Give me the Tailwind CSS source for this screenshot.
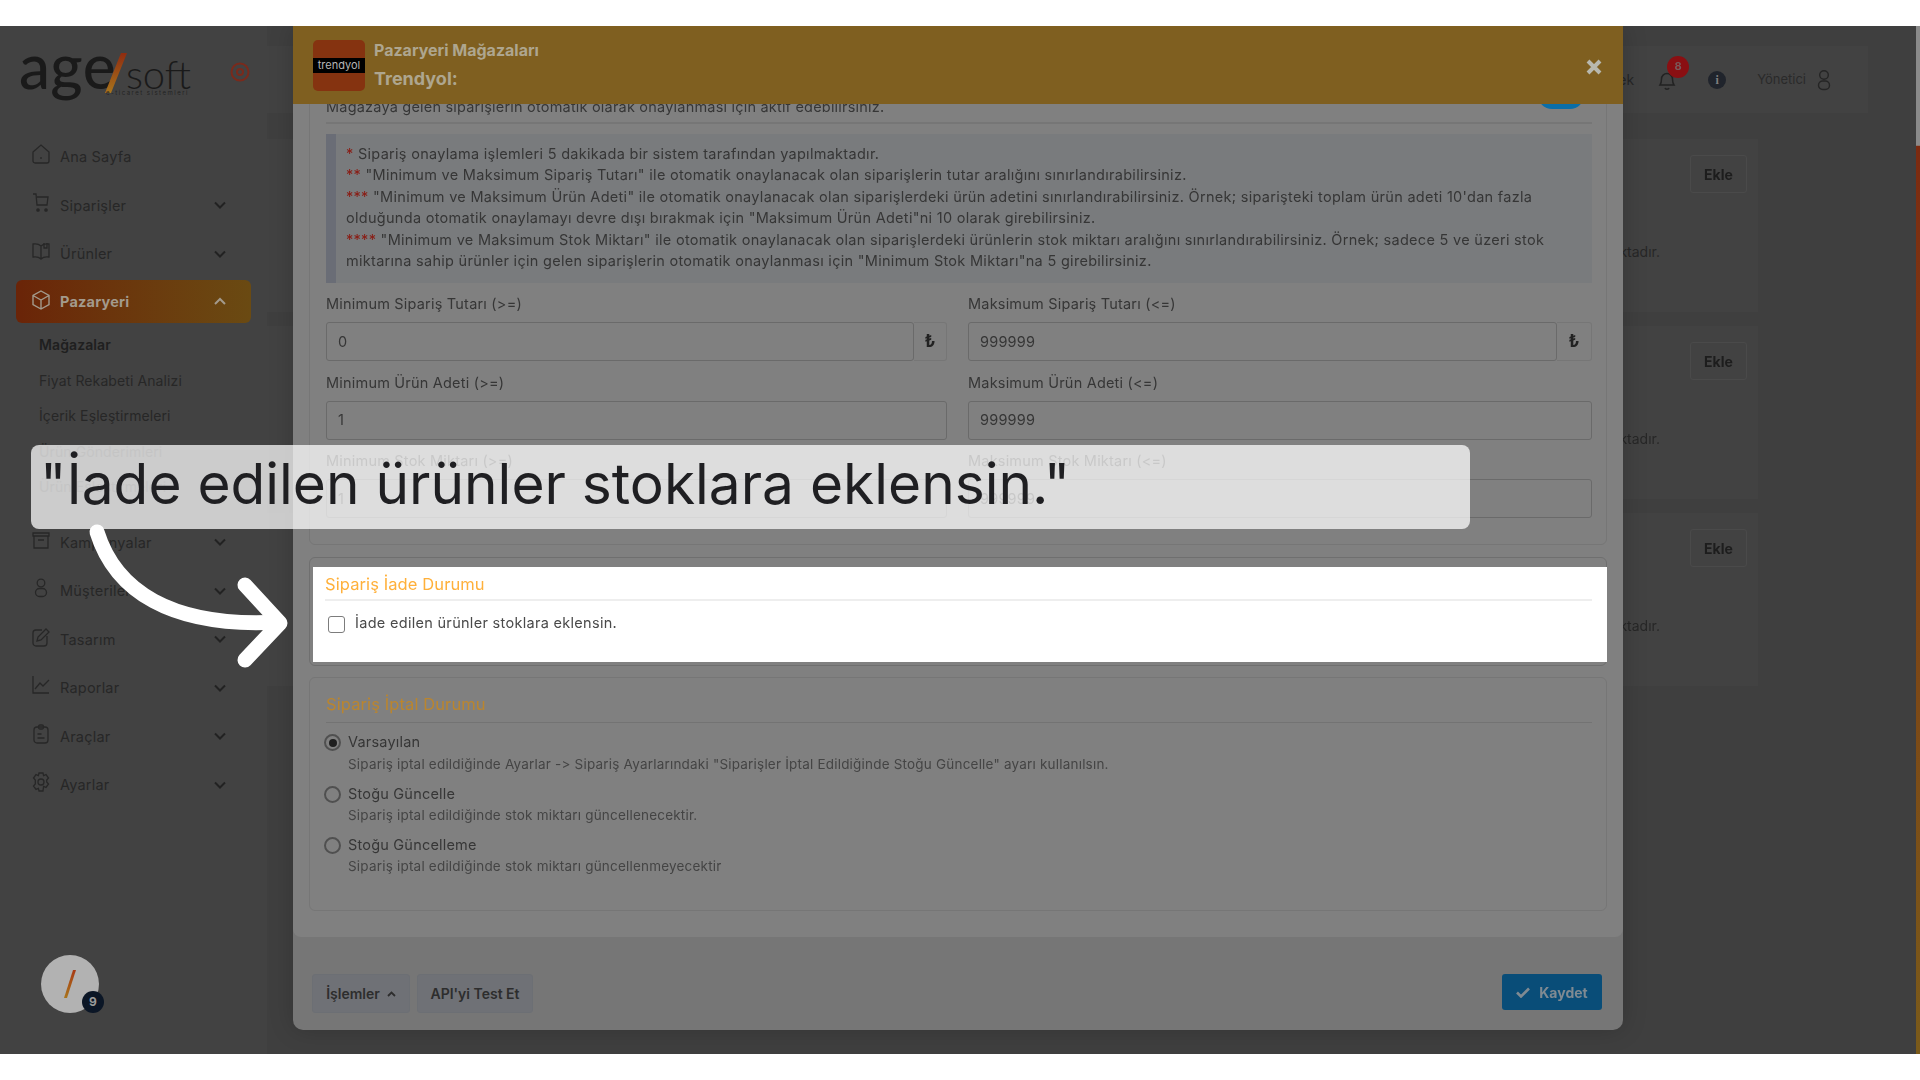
<!DOCTYPE html>
<html lang="tr">
<head>
<meta charset="utf-8">
<title>Sipariş İade Durumu</title>
<script src="https://cdn.jsdelivr.net/npm/@tailwindcss/browser@4"></script>
</head>
<body class="m-0 w-[1920px] h-[1080px] overflow-hidden bg-white font-['Inter',sans-serif]">
<div class="h-[26px] bg-white"></div>
<div class="relative h-[1028px] w-[1920px] overflow-hidden bg-[#3f3f3f]">
  <div class="flex h-full blur-[0.4px]">
    <!-- Sidebar -->
    <aside class="w-[267px] h-full shrink-0 bg-[#424242] text-[#272727] text-[14.5px] tracking-[0.2px]">
      <div class="relative h-[107px]">
        <div class="absolute left-[19px] top-[9px] flex items-baseline leading-[60px] text-[#1a1a1a] tracking-normal">
          <span class="font-['Lato'] text-[62px] font-medium tracking-[0.4px]">age</span>
          <svg width="24" height="42" viewBox="0 0 24 42" class="-ml-[12px] -mr-[2px] self-center mt-[6px]"><defs><linearGradient id="lg" x1="0" y1="1" x2="0" y2="0"><stop offset="0" stop-color="#a8741c"/><stop offset="1" stop-color="#8f2c10"/></linearGradient></defs><path d="M17 1h6L7 41H1z" fill="url(#lg)"/></svg>
          <span class="font-['Lato'] text-[40px] font-light">soft</span>
        </div>
        <div class="absolute left-[106px] top-[62px] text-[6px] tracking-[1.5px] leading-[10px] text-[#222]">e-ticaret sistemleri</div>
        <svg class="absolute left-[230px] top-[36px]" width="20" height="20" viewBox="0 0 20 20" fill="none" stroke="#7a2a1c"><circle cx="10" cy="10" r="8.500" stroke-width="2"/><circle cx="10" cy="10" r="3" stroke-width="2"/></svg>
      </div>
      <nav class="flex flex-col pl-[16px] pr-[16px]">
        <a class="flex items-center h-[48.5px] pl-[16px] gap-[10px]"><svg class="-translate-y-[3px]" width="18" height="20" viewBox="0 0 18 20" fill="none" stroke="#272727" stroke-width="1.3"><path d="M1 8l8-7 8 7v9a2 2 0 0 1-2 2H3a2 2 0 0 1-2-2z"/><path d="M9 13v2"/></svg><span>Ana Sayfa</span></a>
        <a class="flex items-center h-[48.5px] pl-[16px] gap-[10px]"><svg class="-translate-y-[3px]" width="18" height="20" viewBox="0 0 18 20" fill="none" stroke="#272727" stroke-width="1.3"><path d="M1 1h3l1 11h10l1-8H5"/><circle cx="6" cy="17" r="1.2" fill="#272727"/><circle cx="14" cy="17" r="1.2" fill="#272727"/></svg><span>Siparişler</span><svg class="ml-auto mr-[24px]" width="14" height="9" viewBox="0 0 14 9" fill="none" stroke="#222" stroke-width="2"><path d="M2 1.500l5 5 5-5"/></svg></a>
        <a class="flex items-center h-[48.5px] pl-[16px] gap-[10px]"><svg class="-translate-y-[3px]" width="18" height="20" viewBox="0 0 18 20" fill="none" stroke="#272727" stroke-width="1.3"><path d="M9 5C7 3 4 2.500 1 3v13c3-.5 6 0 8 2 2-2 5-2.500 8-2V3c-3-.5-6 0-8 2zM9 5v13"/><path d="M12 2v5h3V2"/></svg><span>Ürünler</span><svg class="ml-auto mr-[24px]" width="14" height="9" viewBox="0 0 14 9" fill="none" stroke="#222" stroke-width="2"><path d="M2 1.500l5 5 5-5"/></svg></a>
        <a class="flex items-center h-[43px] mt-[1.5px] pl-[16px] gap-[10px] rounded-[6px] bg-gradient-to-r from-[#6a2408] to-[#6a4a12] font-bold text-[#a39a8c]"><svg class="-translate-y-[2px]" width="18" height="20" viewBox="0 0 18 20" fill="none" stroke="#a39a8c" stroke-width="1.4"><path d="M9 1l8 4.500v9L9 19l-8-4.500v-9zM1 5.500l8 4.500 8-4.500M9 10v9"/></svg><span>Pazaryeri</span><svg class="ml-auto mr-[24px]" width="14" height="9" viewBox="0 0 14 9" fill="none" stroke="#a39a8c" stroke-width="2"><path d="M2 7l5-5 5 5"/></svg></a>
        <div class="flex flex-col mt-[4px] pl-[23px] text-[14px] tracking-[0.1px]">
          <a class="flex items-center h-[35.500px] font-semibold text-[#1f1f1f]">Mağazalar</a>
          <a class="flex items-center h-[35.500px]">Fiyat Rekabeti Analizi</a>
          <a class="flex items-center h-[35.500px]">İçerik Eşleştirmeleri</a>
          <a class="flex items-center h-[35.500px]">Ürün Gönderimleri</a>
          <a class="flex items-center h-[35.500px]">Ürün Eşleştirmeleri</a>
        </div>
        <a class="flex items-center h-[48.5px] mt-[14px] pl-[16px] gap-[10px]"><svg class="-translate-y-[3px]" width="18" height="20" viewBox="0 0 18 20" fill="none" stroke="#272727" stroke-width="1.3"><path d="M2 6h14v12H2zM1 3h16v3H1zM6 10h6"/></svg><span>Kampanyalar</span><svg class="ml-auto mr-[24px]" width="14" height="9" viewBox="0 0 14 9" fill="none" stroke="#222" stroke-width="2"><path d="M2 1.500l5 5 5-5"/></svg></a>
        <a class="flex items-center h-[48.5px] pl-[16px] gap-[10px]"><svg class="-translate-y-[3px]" width="18" height="20" viewBox="0 0 18 20" fill="none" stroke="#272727" stroke-width="1.3"><circle cx="9" cy="5" r="3.800"/><rect x="3.500" y="10.500" width="11" height="8" rx="4"/></svg><span>Müşteriler</span><svg class="ml-auto mr-[24px]" width="14" height="9" viewBox="0 0 14 9" fill="none" stroke="#222" stroke-width="2"><path d="M2 1.500l5 5 5-5"/></svg></a>
        <a class="flex items-center h-[48.5px] pl-[16px] gap-[10px]"><svg class="-translate-y-[3px]" width="18" height="20" viewBox="0 0 18 20" fill="none" stroke="#272727" stroke-width="1.3"><path d="M15 9v7a3 3 0 0 1-3 3H4a3 3 0 0 1-3-3V6a3 3 0 0 1 3-3h6"/><path d="M5 14l1-4 8-8 3 3-8 8z"/></svg><span>Tasarım</span><svg class="ml-auto mr-[24px]" width="14" height="9" viewBox="0 0 14 9" fill="none" stroke="#222" stroke-width="2"><path d="M2 1.500l5 5 5-5"/></svg></a>
        <a class="flex items-center h-[48.5px] pl-[16px] gap-[10px]"><svg class="-translate-y-[3px]" width="18" height="20" viewBox="0 0 18 20" fill="none" stroke="#272727" stroke-width="1.3"><path d="M1 1v17h16"/><path d="M3 14l5-6 3 3 6-6"/></svg><span>Raporlar</span><svg class="ml-auto mr-[24px]" width="14" height="9" viewBox="0 0 14 9" fill="none" stroke="#222" stroke-width="2"><path d="M2 1.500l5 5 5-5"/></svg></a>
        <a class="flex items-center h-[48.5px] pl-[16px] gap-[10px]"><svg class="-translate-y-[3px]" width="18" height="20" viewBox="0 0 18 20" fill="none" stroke="#272727" stroke-width="1.3"><rect x="2" y="3" width="14" height="16" rx="3"/><rect x="6.500" y="1" width="5" height="4" rx="1.500"/><path d="M5.500 10h4M5.500 14h7"/></svg><span>Araçlar</span><svg class="ml-auto mr-[24px]" width="14" height="9" viewBox="0 0 14 9" fill="none" stroke="#222" stroke-width="2"><path d="M2 1.500l5 5 5-5"/></svg></a>
        <a class="flex items-center h-[48.5px] pl-[16px] gap-[10px]"><svg class="-translate-y-[3px]" width="18" height="20" viewBox="0 0 18 20" fill="none" stroke="#272727" stroke-width="1.3"><circle cx="9" cy="10" r="3"/><path d="M7 1h4l.6 2.600 2.400-1 2.500 3.400-1.800 2 0 2 1.800 2-2.500 3.400-2.400-1L11 19H7l-.6-2.600-2.400 1L1.500 14l1.800-2v-4l-1.800-2L4 2.600l2.400 1z"/></svg><span>Ayarlar</span><svg class="ml-auto mr-[24px]" width="14" height="9" viewBox="0 0 14 9" fill="none" stroke="#222" stroke-width="2"><path d="M2 1.500l5 5 5-5"/></svg></a>
      </nav>
      <div class="absolute left-[41px] top-[929px] w-[58px] h-[58px] rounded-full bg-[#b2b2b2] flex items-center justify-center">
        <svg width="14" height="30" viewBox="0 0 14 30"><defs><linearGradient id="sl" x1="0" y1="1" x2="0" y2="0"><stop offset="0" stop-color="#a8741c"/><stop offset="1" stop-color="#a83a14"/></linearGradient></defs><path d="M10 1h3L4 29H1z" fill="url(#sl)"/></svg>
        <span class="absolute left-[41px] top-[36px] w-[22px] h-[22px] rounded-full bg-[#0b1626] text-[#9a9a9a] text-[12px] font-bold flex items-center justify-center">9</span>
      </div>
    </aside>
    <!-- Page behind the dialog -->
    <main class="flex-1 h-full">
      <header class="flex items-center justify-end mt-[20px] h-[67px] w-[1601px] bg-[#424242] text-[#2a2a2a] text-[13px]">
        <span class="text-[14px] text-[#262626]">Destek</span>
        <span class="relative ml-[24px] shrink-0"><svg width="18" height="22" viewBox="0 0 18 22" fill="none" stroke="#222" stroke-width="1.500"><path d="M2 16c1-1.500 1.500-3 1.500-6a5.500 5.500 0 0 1 11 0c0 3 .5 4.500 1.500 6zM7 19c.5 1.500 3.500 1.500 4 0"/></svg><span class="absolute left-[9px] top-[-13px] w-[22px] h-[22px] rounded-full bg-[#8a0f12] text-[#7a5a5a] text-[11px] font-bold flex items-center justify-center">8</span></span>
        <span class="ml-[32px] w-[18px] h-[18px] rounded-full bg-[#20242c] text-[#7f7f7f] text-[12px] font-bold leading-[18px] text-center font-['Liberation_Serif']">i</span>
        <span class="ml-[31px]">Yönetici</span>
        <svg class="ml-[11px] mr-[37px]" width="14" height="22" viewBox="0 0 14 22" fill="none" stroke="#252525" stroke-width="1.400"><circle cx="7" cy="6" r="4.300"/><rect x="1.500" y="12" width="11" height="8.500" rx="4.200"/></svg>
      </header>
      <section class="flex flex-col gap-[14px] mt-[26px] w-[1491px]">
        <div class="relative h-[173px] bg-[#424242]"><a class="absolute right-[11px] top-[16px] w-[57px] h-[38px] flex items-center justify-center rounded-[3px] border border-[#4a4a4a] text-[#1d1d1d] text-[14px] font-bold">Ekle</a><p class="absolute right-[98px] top-[102px] whitespace-nowrap text-[14px] text-[#272727]">kullanılmaktadır.</p></div>
        <div class="relative h-[173px] bg-[#424242]"><a class="absolute right-[11px] top-[16px] w-[57px] h-[38px] flex items-center justify-center rounded-[3px] border border-[#4a4a4a] text-[#1d1d1d] text-[14px] font-bold">Ekle</a><p class="absolute right-[98px] top-[102px] whitespace-nowrap text-[14px] text-[#272727]">kullanılmaktadır.</p></div>
        <div class="relative h-[173px] bg-[#424242]"><a class="absolute right-[11px] top-[16px] w-[57px] h-[38px] flex items-center justify-center rounded-[3px] border border-[#4a4a4a] text-[#1d1d1d] text-[14px] font-bold">Ekle</a><p class="absolute right-[98px] top-[102px] whitespace-nowrap text-[14px] text-[#272727]">kullanılmaktadır.</p></div>
      </section>
    </main>
    <div class="absolute right-0 top-0 w-[4px] h-full bg-gradient-to-b from-[#8a8a8a] from-[11.600%] via-[#7c2a10] via-[11.700%] to-[#7a5a1a]"></div>
    <!-- Dialog -->
    <div class="absolute left-[293px] top-0 w-[1330px] h-[1004px] rounded-b-[10px] bg-[#767676] shadow-[0_0_24px_rgba(0,0,0,0.18)] flex flex-col">
      <div class="h-[78px] shrink-0 bg-[#7f5f20] flex items-center pl-[20px] pr-[21px] z-10">
        <div class="w-[52px] h-[51px] rounded-[5px] bg-[#853310] flex items-center"><div class="w-full h-[15px] bg-black text-[#b5b5b5] text-[11px] leading-[15px] text-center">trendyol</div></div>
        <div class="ml-[9px] mt-[5px] font-bold text-[#aea68f]"><div class="text-[16px] leading-[23px]">Pazaryeri Mağazaları</div><div class="text-[18px] leading-[34px]">Trendyol:</div></div>
        <svg class="ml-auto mt-[3px]" width="16" height="16" viewBox="0 0 16 16" stroke="#b8b8ae" stroke-width="4"><path d="M2 2l12 12M14 2L2 14"/></svg>
      </div>
      <div class="h-[833px] shrink-0 bg-[#808080] rounded-b-[8px] overflow-hidden px-[16px] text-[14.5px] tracking-[0.2px] text-[#363636]">
        <!-- Fieldset 1 -->
        <div class="relative -mt-[20px] h-[461px] rounded-[6px] border border-[#767676] pl-[16px] pr-[14px] pt-[11px]">
          <p class="leading-[21px]">Mağazaya gelen siparişlerin otomatik olarak onaylanması için aktif edebilirsiniz.</p>
          <div class="absolute right-[22px] top-[-4px] w-[46px] h-[28px] rounded-full bg-[#0a6ea8]"></div>
          <div class="mt-[5px] h-[2px] bg-[#767676]"></div>
          <div class="mt-[10px] h-[149px] border-l-[10px] border-[#6a6d76] bg-[#797b7d] pl-[10px] pt-[9px] text-[14.5px] leading-[21.4px] whitespace-nowrap tracking-[0.29px]">
            <span class="text-[#8a1a12]">*</span> Sipariş onaylama işlemleri 5 dakikada bir sistem tarafından yapılmaktadır.<br>
            <span class="text-[#8a1a12]">**</span> "Minimum ve Maksimum Sipariş Tutarı" ile otomatik onaylanacak olan siparişlerin tutar aralığını sınırlandırabilirsiniz.<br>
            <span class="text-[#8a1a12]">***</span> "Minimum ve Maksimum Ürün Adeti" ile otomatik onaylanacak olan siparişlerdeki ürün adetini sınırlandırabilirsiniz. Örnek; siparişteki toplam ürün adeti 10'dan fazla<br>
            olduğunda otomatik onaylamayı devre dışı bırakmak için "Maksimum Ürün Adeti"ni 10 olarak girebilirsiniz.<br>
            <span class="text-[#8a1a12]">****</span> "Minimum ve Maksimum Stok Miktarı" ile otomatik onaylanacak olan siparişlerdeki ürünlerin stok miktarı aralığını sınırlandırabilirsiniz. Örnek; sadece 5 ve üzeri stok<br>
            miktarına sahip ürünler için gelen siparişlerin otomatik onaylanması için "Minimum Stok Miktarı"na 5 girebilirsiniz.
          </div>
          <div class="mt-[10px] grid grid-cols-[621px_624px] gap-x-[21px] gap-y-[10.500px]">
            <div><div class="h-[20px] leading-[22px]">Minimum Sipariş Tutarı (&gt;=)</div><div class="mt-[9px] flex h-[39px]"><div class="flex-1 flex items-center pl-[11px] rounded-[3px] border border-[#6a6a6a]">0</div><div class="w-[33px] flex items-center justify-center rounded-r-[3px] border border-l-0 border-[#767676] font-bold text-[17px] text-[#222]">₺</div></div></div>
            <div><div class="h-[20px] leading-[22px]">Maksimum Sipariş Tutarı (&lt;=)</div><div class="mt-[9px] flex h-[39px]"><div class="flex-1 flex items-center pl-[11px] rounded-[3px] border border-[#6a6a6a]">999999</div><div class="w-[35px] flex items-center justify-center rounded-r-[3px] border border-l-0 border-[#767676] font-bold text-[17px] text-[#222]">₺</div></div></div>
            <div><div class="h-[20px] leading-[22px]">Minimum Ürün Adeti (&gt;=)</div><div class="mt-[9px] h-[39px] flex items-center pl-[11px] rounded-[3px] border border-[#6a6a6a]">1</div></div>
            <div><div class="h-[20px] leading-[22px]">Maksimum Ürün Adeti (&lt;=)</div><div class="mt-[9px] h-[39px] flex items-center pl-[11px] rounded-[3px] border border-[#6a6a6a]">999999</div></div>
            <div><div class="h-[20px] leading-[22px]">Minimum Stok Miktarı (&gt;=)</div><div class="mt-[9px] h-[39px] flex items-center pl-[11px] rounded-[3px] border border-[#6a6a6a]">1</div></div>
            <div><div class="h-[20px] leading-[22px]">Maksimum Stok Miktarı (&lt;=)</div><div class="mt-[9px] h-[39px] flex items-center pl-[11px] rounded-[3px] border border-[#6a6a6a]">999999</div></div>
          </div>
        </div>
        <!-- Fieldset 2: highlighted -->
        <div class="mt-[12px] h-[109px] rounded-[6px] border border-[#6f6f6f] pl-[3px] pt-[9px]">
          <div class="h-[95px] -mr-[1px] bg-white pl-[12px] pr-[15px] pt-[6px]">
            <div class="h-[23px] leading-[23px] text-[16.5px] tracking-[0.1px] text-[#ffb03a]">Sipariş İade Durumu</div>
            <div class="mt-[3px] h-[2px] bg-[#eeeeee]"></div>
            <label class="mt-[12px] flex items-start text-[#4a4a4a] text-[14.5px] tracking-[0.3px]"><span class="ml-[3px] mt-[3px] w-[17px] h-[17px] rounded-[3px] border border-[#7c7c7c] bg-white"></span><span class="ml-[10px] leading-[20px]">İade edilen ürünler stoklara eklensin.</span></label>
          </div>
        </div>
        <!-- Fieldset 3 -->
        <div class="mt-[11px] h-[234px] rounded-[6px] border border-[#767676] pl-[16px] pr-[14px] pt-[15px]">
          <div class="h-[23px] leading-[23px] text-[16.5px] tracking-[0.1px] text-[#ba852e]">Sipariş İptal Durumu</div>
          <div class="mt-[6px] h-[1px] bg-[#737373]"></div>
          <div class="mt-[9px] flex flex-col gap-[10px]">
            <div class="flex"><span class="mt-[2px] -ml-[2px] w-[17px] h-[17px] rounded-full border-2 border-[#505050] flex items-center justify-center"><span class="w-[8px] h-[8px] rounded-full bg-[#1f1f1f]"></span></span><div class="ml-[7px]"><div class="leading-[20px]">Varsayılan</div><div class="leading-[20px] text-[13.5px] tracking-[0.2px] text-[#444444] mt-[2px]">Sipariş iptal edildiğinde Ayarlar -&gt; Sipariş Ayarlarındaki "Siparişler İptal Edildiğinde Stoğu Güncelle" ayarı kullanılsın.</div></div></div>
            <div class="flex"><span class="mt-[2px] -ml-[2px] w-[17px] h-[17px] rounded-full border-2 border-[#505050]"></span><div class="ml-[7px]"><div class="leading-[20px]">Stoğu Güncelle</div><div class="leading-[20px] text-[13.5px] tracking-[0.2px] text-[#444444] mt-[1px]">Sipariş iptal edildiğinde stok miktarı güncellenecektir.</div></div></div>
            <div class="flex"><span class="mt-[2px] -ml-[2px] w-[17px] h-[17px] rounded-full border-2 border-[#505050]"></span><div class="ml-[7px]"><div class="leading-[20px]">Stoğu Güncelleme</div><div class="leading-[20px] text-[13.5px] tracking-[0.2px] text-[#444444] mt-[1px]">Sipariş iptal edildiğinde stok miktarı güncellenmeyecektir</div></div></div>
          </div>
        </div>
      </div>
      <div class="flex-1 flex items-start px-[19px] pt-[37px] text-[14px] font-semibold text-[#2d2d2d]">
        <button class="w-[98px] h-[39px] flex items-center justify-center gap-[7px] rounded-[3px] border border-[#6c6f74] bg-[#6f7176]">İşlemler <svg width="9" height="6" viewBox="0 0 9 6" fill="none" stroke="#2d2d2d" stroke-width="1.800"><path d="M1 5l3.500-3.500L8 5"/></svg></button>
        <button class="ml-[7px] w-[116px] h-[39px] rounded-[3px] border border-[#6c6f74] bg-[#6f7176]">API'yi Test Et</button>
        <button class="ml-auto w-[100px] h-[36px] flex items-center justify-center gap-[9px] rounded-[3px] mr-[2px] bg-[#094d78] text-[#7f8a92] font-bold"><svg width="14" height="11" viewBox="0 0 14 11" fill="none" stroke="#7f8a92" stroke-width="2.600"><path d="M1 5.500l4 4 8-8"/></svg>Kaydet</button>
      </div>
    </div>
  </div>
  <!-- Tutorial annotation -->
  <div class="absolute left-[31px] top-[419px] w-[1439px] h-[84px] rounded-[8px] bg-white/73 pl-[9px] font-['Inter',sans-serif] text-[56.8px] leading-[78px] text-[#1f1f22] whitespace-nowrap">"İade edilen ürünler stoklara eklensin."</div>
  <svg class="absolute left-0 top-0" width="320" height="700" viewBox="0 26 320 700" fill="none" stroke="#ffffff" stroke-width="15" stroke-linecap="round" stroke-linejoin="round"><path d="M97 532C115 590 170 628 278 622"/><path d="M245 585l35 38-35 37"/></svg>
</div>
<div class="h-[26px] bg-white"></div>
</body>
</html>
